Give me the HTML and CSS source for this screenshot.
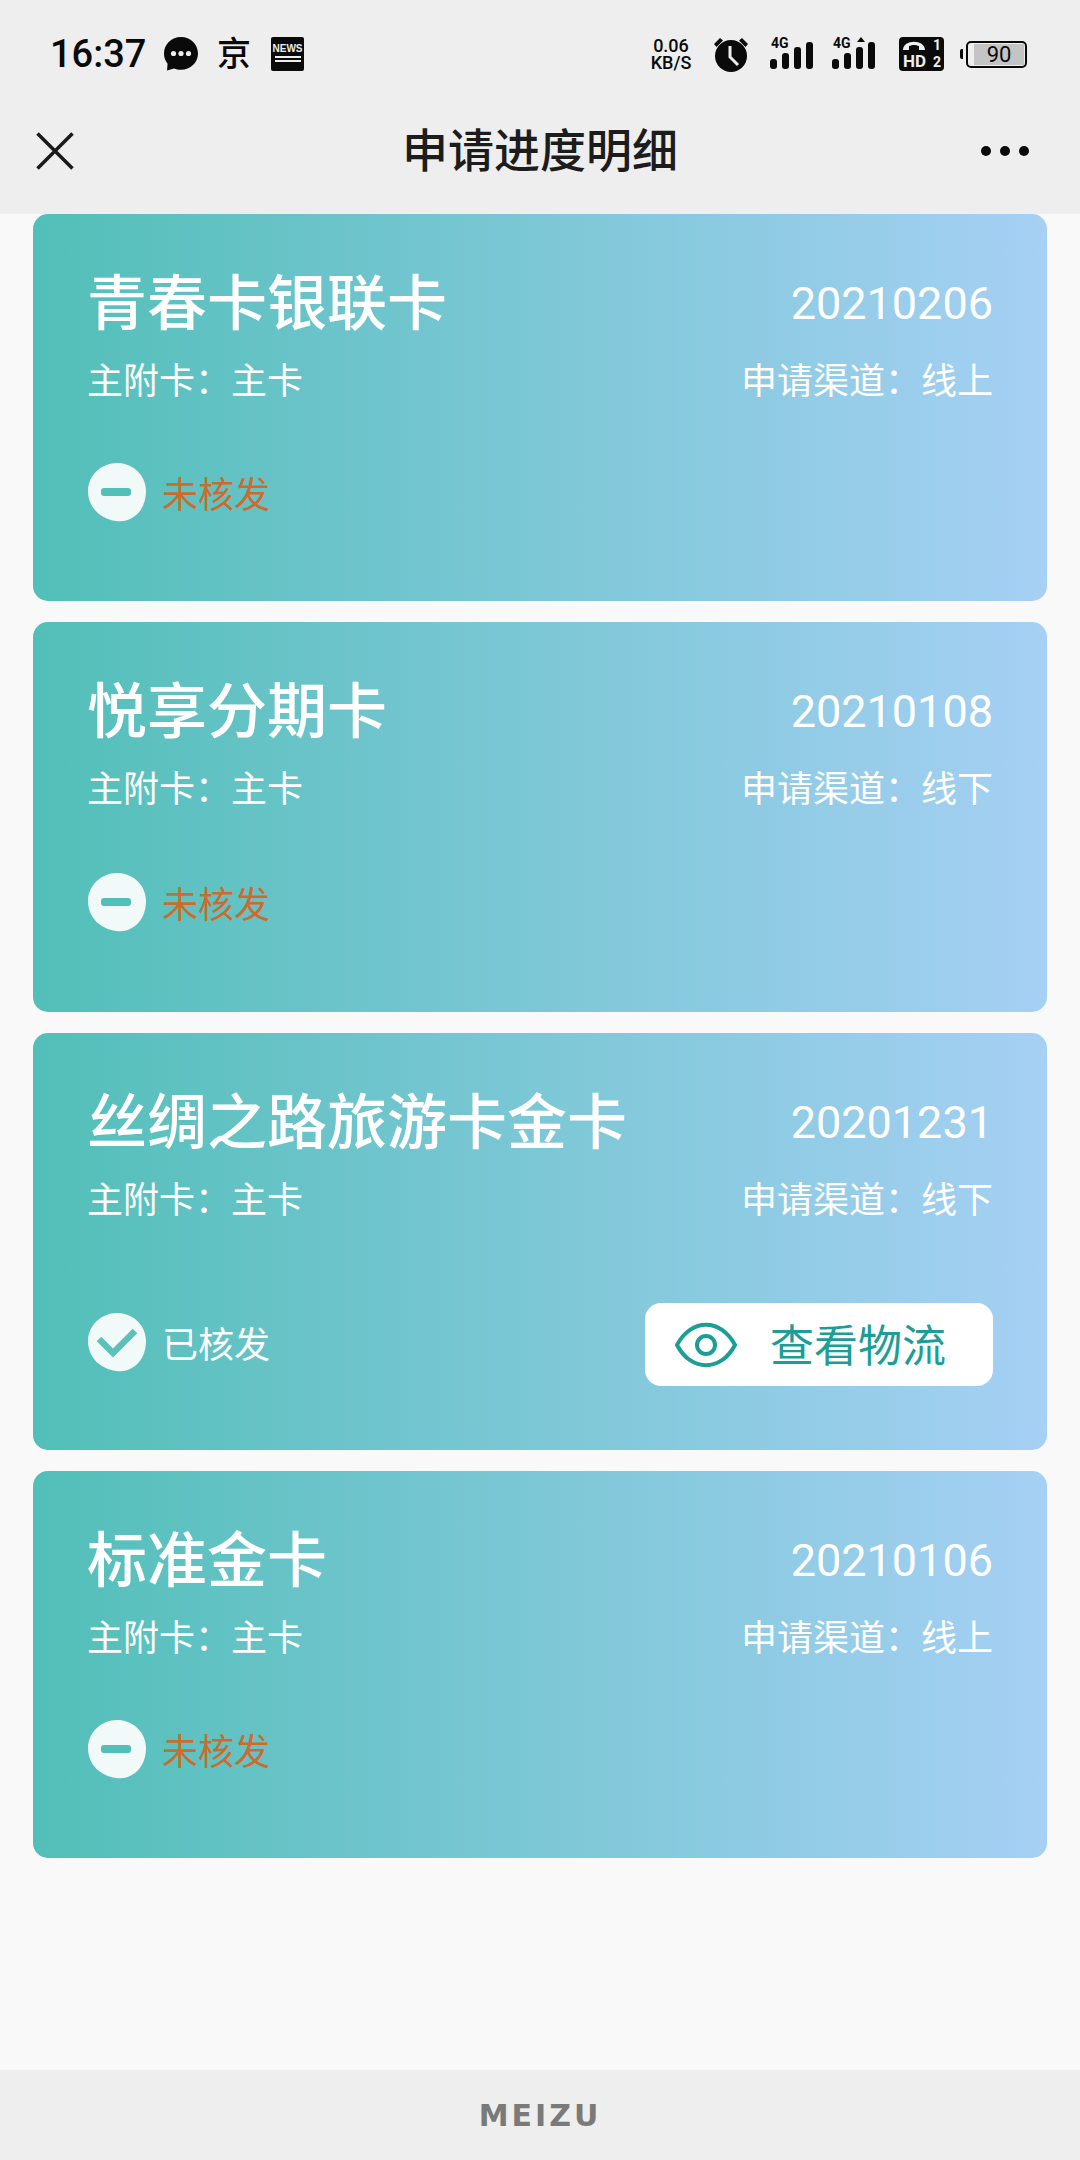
FILE: index.html
```html
<!DOCTYPE html>
<html lang="zh-CN">
<head>
    <meta charset="UTF-8">
    <meta name="viewport" content="width=device-width, initial-scale=1.0">
    <title>申请进度明细</title>
    <link rel="stylesheet" href="styles.css">
</head>
<body>
    <div class="top-area">
        <div class="status-bar">
            <div class="status-left">
                <span class="status-time">16:37</span>
                <svg class="icon-chat" width="36" height="36" viewBox="0 0 36 36">
                    <path d="M18 1C8.6 1 1 8.2 1 17.5c0 4 1.3 7.4 3.6 10.2L4 34.5l7-2.1c2.1.8 4.4 1.3 7 1.3 9.400 0 17-7 17-16.200S27.400 1 18 1z" fill="#0a0a0a"/>
                    <circle cx="10.500" cy="17.500" r="2.600" fill="#eee"/>
                    <circle cx="18" cy="17.500" r="2.600" fill="#eee"/>
                    <circle cx="25.500" cy="17.500" r="2.600" fill="#eee"/>
                </svg>
                <span class="status-jing">京</span>
                <div class="icon-news">
                    <span>NEWS</span>
                    <i></i>
                    <i></i>
                </div>
            </div>
            <div class="status-right">
                <div class="net-speed">0.06 KB/S</div>
                <svg width="38" height="36" viewBox="0 0 38 36">
                    <path d="M2 8 L8 2 L11 4.500 L4.500 11 Z M36 8 L30 2 L27 4.500 L33.500 11 Z" fill="#0a0a0a"/>
                    <circle cx="19" cy="20" r="16" fill="#0a0a0a"/>
                    <path d="M18 10 V21 L26 29" fill="none" stroke="#eee" stroke-width="3"/>
                </svg>
                <div class="signal">
                    <span class="signal-label">4G</span>
                    <div class="signal-bars">
                        <i class="bar-1"></i>
                        <i class="bar-2"></i>
                        <i class="bar-3"></i>
                        <i class="bar-4"></i>
                    </div>
                </div>
                <div class="signal">
                    <span class="signal-label">4G</span>
                    <b class="signal-arrow"></b>
                    <div class="signal-bars">
                        <i class="bar-1"></i>
                        <i class="bar-2"></i>
                        <i class="bar-3"></i>
                        <i class="bar-4"></i>
                    </div>
                </div>
                <div class="icon-hd">
                    <svg width="24" height="14" viewBox="0 0 24 14">
                        <path d="M1 11 C1 0 23 0 23 11 L17 11 L17 7 C13 5.500 11 5.500 7 7 L7 11 Z" fill="#eee"/>
                    </svg>
                    <span class="hd-text">HD</span>
                    <span class="hd-one">1</span>
                    <span class="hd-two">2</span>
                </div>
                <div class="battery">
                    <b class="battery-cap"></b>
                    <div class="battery-body">
                        <span>90</span>
                    </div>
                </div>
            </div>
        </div>
        <div class="nav-bar">
            <svg width="38" height="38" viewBox="0 0 38 38">
                <path d="M1.500 1.500 L36.500 36.500 M36.500 1.500 L1.500 36.500" stroke="#1a1a1a" stroke-width="3.500" fill="none"/>
            </svg>
            <h1>申请进度明细</h1>
            <div class="nav-more">
                <i></i>
                <i></i>
                <i></i>
            </div>
        </div>
    </div>

    <div class="card-list">
        <div class="card">
            <div class="card-row">
                <div class="card-name">青春卡银联卡</div>
                <div class="card-date">20210206</div>
            </div>
            <div class="card-row card-info">
                <span>主附卡：主卡</span>
                <span>申请渠道：线上</span>
            </div>
            <div class="card-status">
                <svg class="status-icon" width="60" height="60" viewBox="0 0 60 60">
                    <path d="M32 1C47 2 59 14 59 29c0 9-3 19-11 25-6 4.500-12 6-19 5C14 57 1 46 1 29 1 13 15 0 32 1z" fill="#f1f9f9"/>
                    <rect x="14" y="26" width="30" height="8" rx="3" fill="#52bfb8"/>
                </svg>
                <span class="status-text not-issued">未核发</span>
            </div>
        </div>

        <div class="card card-high">
            <div class="card-row">
                <div class="card-name">悦享分期卡</div>
                <div class="card-date">20210108</div>
            </div>
            <div class="card-row card-info">
                <span>主附卡：主卡</span>
                <span>申请渠道：线下</span>
            </div>
            <div class="card-status">
                <svg class="status-icon" width="60" height="60" viewBox="0 0 60 60">
                    <path d="M32 1C47 2 59 14 59 29c0 9-3 19-11 25-6 4.500-12 6-19 5C14 57 1 46 1 29 1 13 15 0 32 1z" fill="#f1f9f9"/>
                    <rect x="14" y="26" width="30" height="8" rx="3" fill="#52bfb8"/>
                </svg>
                <span class="status-text not-issued">未核发</span>
            </div>
        </div>

        <div class="card card-issued">
            <div class="card-row">
                <div class="card-name">丝绸之路旅游卡金卡</div>
                <div class="card-date">20201231</div>
            </div>
            <div class="card-row card-info">
                <span>主附卡：主卡</span>
                <span>申请渠道：线下</span>
            </div>
            <div class="card-status">
                <svg class="status-icon" width="60" height="60" viewBox="0 0 60 60">
                    <path d="M32 1C47 2 59 14 59 29c0 9-3 19-11 25-6 4.500-12 6-19 5C14 57 1 46 1 29 1 13 15 0 32 1z" fill="#f1f9f9"/>
                    <path d="M12 27 L26 41 L48 19" fill="none" stroke="#5cc0bb" stroke-width="6.500"/>
                </svg>
                <span class="status-text">已核发</span>
                <div class="logistics-btn">
                    <svg width="62" height="46" viewBox="0 0 62 46">
                        <path d="M2 23 C16 -4 46 -4 60 23 C46 50 16 50 2 23 Z" fill="none" stroke="#1a9e96" stroke-width="4"/>
                        <circle cx="31" cy="23" r="9" fill="none" stroke="#1a9e96" stroke-width="4"/>
                    </svg>
                    <span>查看物流</span>
                </div>
            </div>
        </div>

        <div class="card">
            <div class="card-row">
                <div class="card-name">标准金卡</div>
                <div class="card-date">20210106</div>
            </div>
            <div class="card-row card-info">
                <span>主附卡：主卡</span>
                <span>申请渠道：线上</span>
            </div>
            <div class="card-status">
                <svg class="status-icon" width="60" height="60" viewBox="0 0 60 60">
                    <path d="M32 1C47 2 59 14 59 29c0 9-3 19-11 25-6 4.500-12 6-19 5C14 57 1 46 1 29 1 13 15 0 32 1z" fill="#f1f9f9"/>
                    <rect x="14" y="26" width="30" height="8" rx="3" fill="#52bfb8"/>
                </svg>
                <span class="status-text not-issued">未核发</span>
            </div>
        </div>
    </div>

    <div class="footer">
        <span class="footer-logo">MEIZU</span>
    </div>
</body>
</html>
```

FILE: styles.css
```css
* {
    margin: 0;
    padding: 0;
    box-sizing: border-box;
}

body {
    font-family: Roboto, 'Noto Sans CJK SC', sans-serif;
    background: #f9f9f9;
    height: 2160px;
    display: flex;
    flex-direction: column;
    overflow: hidden;
}

.top-area {
    background: #eeeeee;
    height: 214px;
    flex-shrink: 0;
}

/* status bar */
.status-bar {
    height: 108px;
    padding: 0 53px 0 50px;
    display: flex;
    justify-content: space-between;
    align-items: center;
    color: #0a0a0a;
}

.status-left,
.status-right {
    display: flex;
    align-items: center;
}

.status-time {
    font-size: 38px;
    font-weight: 500;
    width: 113px;
}

.status-jing {
    font-size: 34px;
    font-weight: 500;
    margin: 0 20px 0 18px;
    line-height: 36px;
}

.icon-news {
    width: 33px;
    height: 34px;
    background: #0a0a0a;
    border-radius: 2px;
    padding: 7px 2px 0;
    display: flex;
    flex-direction: column;
    align-items: center;
    overflow: hidden;
}

.icon-news span {
    color: #eee;
    font-family: 'Liberation Sans', sans-serif;
    font-size: 10px;
    font-weight: 700;
    line-height: 10px;
    margin-bottom: 2px;
    white-space: nowrap;
}

.icon-news i {
    width: 26px;
    height: 2px;
    background: #eee;
    margin-bottom: 2px;
}

.net-speed {
    width: 44px;
    margin-right: 19px;
    font-size: 18px;
    font-weight: 500;
    line-height: 17px;
    text-align: center;
}

.signal {
    position: relative;
    width: 45px;
    height: 30px;
    margin-left: 20px;
}

.signal + .signal {
    margin-left: 17px;
}

.signal-label {
    position: absolute;
    left: 1px;
    top: -3px;
    font-size: 14px;
    font-weight: 700;
    line-height: 14px;
}

.signal-arrow {
    position: absolute;
    left: 25px;
    top: -2px;
    border-left: 4px solid transparent;
    border-right: 4px solid transparent;
    border-bottom: 5px solid #0a0a0a;
}

.signal-bars {
    height: 100%;
    display: flex;
    align-items: flex-end;
    gap: 5px;
}

.signal-bars i {
    width: 7px;
    border-radius: 3px;
    background: #0a0a0a;
}

.bar-1 { height: 10px; }
.bar-2 { height: 16px; }
.bar-3 { height: 22px; }
.bar-4 { height: 27px; }

.icon-hd {
    position: relative;
    width: 45px;
    height: 34px;
    margin-left: 22px;
    background: #0a0a0a;
    border-radius: 4px;
    color: #eee;
    overflow: hidden;
}

.icon-hd svg {
    position: absolute;
    left: 3px;
    top: 2px;
}

.hd-text {
    position: absolute;
    left: 4px;
    bottom: 1px;
    font-size: 17px;
    font-weight: 700;
    line-height: 17px;
}

.hd-one,
.hd-two {
    position: absolute;
    right: 3px;
    font-size: 14px;
    font-weight: 700;
    line-height: 15px;
}

.hd-one { top: 1px; }
.hd-two { bottom: 1px; }

.battery {
    display: flex;
    align-items: center;
    margin-left: 16px;
}

.battery-cap {
    width: 3px;
    height: 10px;
    background: #0a0a0a;
    border-radius: 2px 0 0 2px;
    margin-right: 3px;
}

.battery-body {
    width: 61px;
    height: 27px;
    border: 2px solid #0a0a0a;
    border-radius: 5px;
    padding: 1px;
    display: flex;
}

.battery-body span {
    flex: 1;
    margin-left: 5px;
    background: #c4c4c4;
    text-align: center;
    font-size: 22px;
    line-height: 21px;
}

/* nav */
.nav-bar {
    height: 86px;
    padding: 0 36px;
    display: grid;
    grid-template-columns: 1fr auto 1fr;
    align-items: center;
}

.nav-bar h1 {
    font-size: 46px;
    font-weight: 500;
    color: #1c1c1c;
    line-height: 60px;
}

.nav-more {
    display: flex;
    gap: 9px;
    justify-self: end;
    margin-right: 15px;
}

.nav-more i {
    width: 10px;
    height: 10px;
    border-radius: 50%;
    background: #0a0a0a;
}

/* cards */
.card-list {
    flex: 1;
    padding: 0 33px;
    display: flex;
    flex-direction: column;
    gap: 21px;
}

.card {
    height: 387px;
    padding: 57px 54px 0 54px;
    border-radius: 15px;
    background: linear-gradient(90deg, #52bfb8 0%, #a6d0f4 100%);
    color: white;
}

.card-high {
    height: 390px;
}

.card-issued {
    height: 417px;
}

.card-row {
    display: flex;
    justify-content: space-between;
    align-items: center;
    height: 60px;
}

.card-name {
    font-size: 60px;
    font-weight: 500;
    line-height: 60px;
    margin-top: 8px;
}

.card-date {
    font-size: 45px;
    margin-top: 4px;
}

.card-info {
    height: 44px;
    margin-top: 25px;
    font-size: 36px;
}

.card-status {
    display: flex;
    align-items: center;
    height: 60px;
    margin-top: 62px;
}

.card-high .card-status {
    margin-top: 64px;
}

.card-issued .card-status {
    height: 83px;
    margin-top: 84px;
}

.card-issued .status-icon,
.card-issued .status-text {
    margin-bottom: 5px;
}

.status-icon {
    flex-shrink: 0;
}

.status-text {
    margin-left: 15px;
    font-size: 36px;
}

.not-issued {
    color: #cc6b2c;
}

.logistics-btn {
    margin-left: auto;
    width: 348px;
    height: 83px;
    padding-left: 30px;
    background: white;
    border-radius: 16px;
    display: flex;
    align-items: center;
    color: #1a9e96;
    font-size: 44px;
}

.logistics-btn span {
    margin: 0 0 4px 33px;
}

/* footer */
.footer {
    height: 90px;
    background: #eeeeee;
    display: flex;
    justify-content: center;
    align-items: center;
    flex-shrink: 0;
}

.footer-logo {
    font-family: 'DejaVu Sans', sans-serif;
    font-size: 30px;
    font-weight: 700;
    color: #7a7a7a;
    letter-spacing: 3px;
}
```
